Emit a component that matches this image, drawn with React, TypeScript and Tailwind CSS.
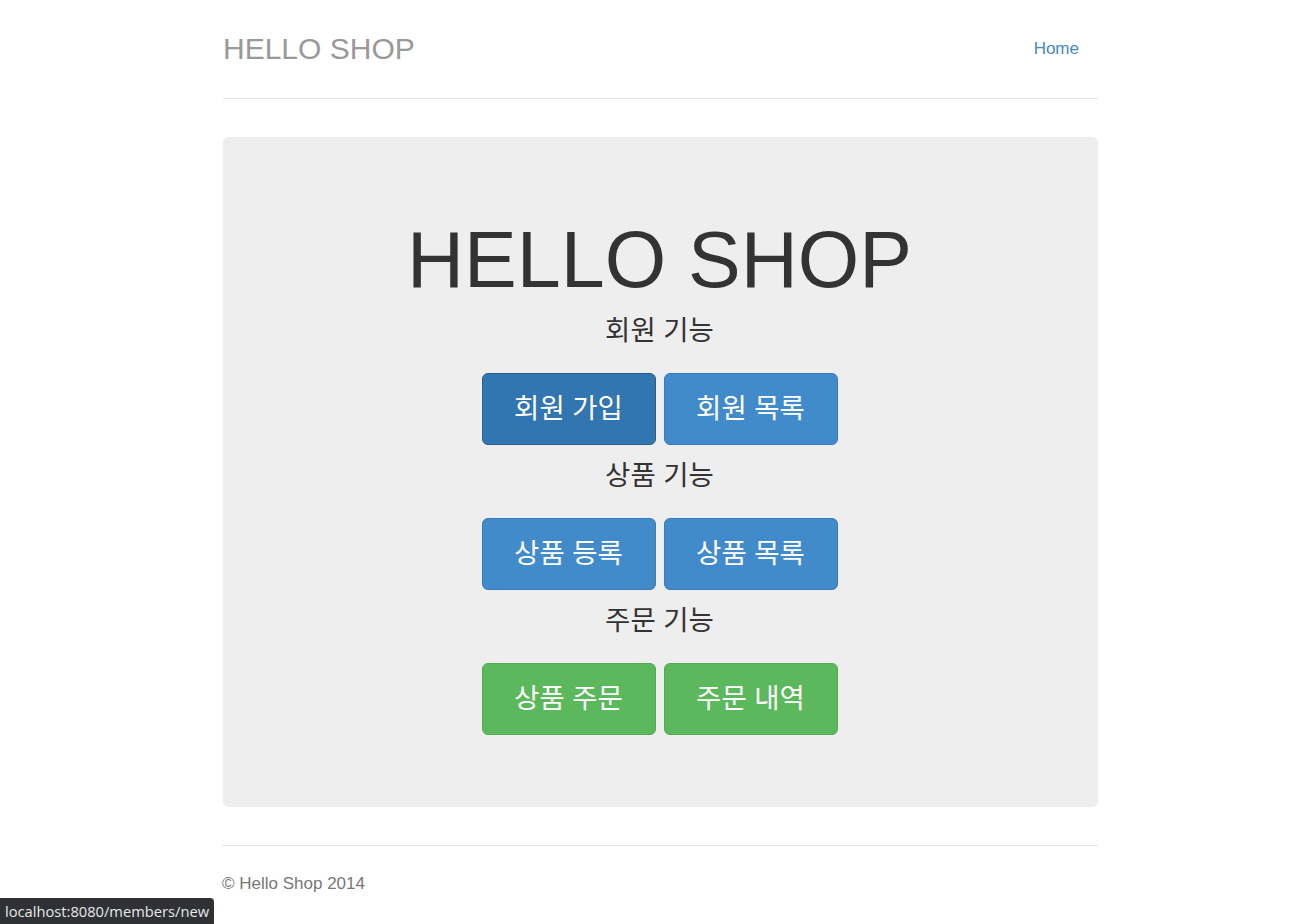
const sans = { fontFamily: '"Liberation Sans", Arial, "Noto Sans CJK KR", sans-serif' }

const sections = [
  { label: '회원 기능', buttons: [{ text: '회원 가입', kind: 'active' }, { text: '회원 목록', kind: 'primary' }] },
  { label: '상품 기능', buttons: [{ text: '상품 등록', kind: 'primary' }, { text: '상품 목록', kind: 'primary' }] },
  { label: '주문 기능', buttons: [{ text: '상품 주문', kind: 'success' }, { text: '주문 내역', kind: 'success' }] },
]

const btnStyles: Record<string, string> = {
  active: 'bg-[#3276b1] border-[#285e8e]',
  primary: 'bg-[#428bca] border-[#357ebd]',
  success: 'bg-[#5cb85c] border-[#4cae4c]',
}

export default function App() {
  return (
    <div className="relative min-h-[924px] bg-white" style={sans}>
      <div className="ml-[223px] w-[875px]">
        {/* Header */}
        <div className="flex items-center justify-between h-[99px] border-b border-[#e5e5e5]">
          <div className="text-[30px] text-[#999999] leading-none">HELLO SHOP</div>
          <a className="text-[17px] text-[#428bca] mr-[19px]">Home</a>
        </div>

        {/* Jumbotron */}
        <div className="mt-[38px] bg-[#eeeeee] rounded-[6px] pt-[83px] pb-[72px] pr-[2px] flex flex-col items-center">
          <h1 className="text-[79px] leading-[80px] h-[80px] text-[#333333]">HELLO SHOP</h1>
          {sections.map((s, i) => (
            <div key={i} className="flex flex-col items-center">
              <div className="mt-[10px] mb-[22px] h-[41px] leading-[41px] text-[27.5px] text-[#333333]">{s.label}</div>
              <div className="flex gap-2">
                {s.buttons.map((b, j) => (
                  <button
                    key={j}
                    className={`w-[174px] h-[72px] rounded-[6px] border flex items-center justify-center text-white text-[27.5px] ${btnStyles[b.kind]}`}
                  >
                    {b.text}
                  </button>
                ))}
              </div>
            </div>
          ))}
        </div>

        {/* Footer */}
        <div className="mt-[38px] border-t border-[#e5e5e5] pt-[25px] text-[17px] text-[#777777] -ml-px">
          © Hello Shop 2014
        </div>
      </div>

      {/* Browser status bubble */}
      <div
        className="fixed left-0 bottom-0 h-[26px] px-[5px] flex items-center bg-[#2f3135] text-[#e8e8e8] text-[14.7px] rounded-tr-[4px]"
        style={{ fontFamily: '"Open Sans", "Noto Sans", sans-serif' }}
      >
        localhost:8080/members/new
      </div>
    </div>
  )
}
